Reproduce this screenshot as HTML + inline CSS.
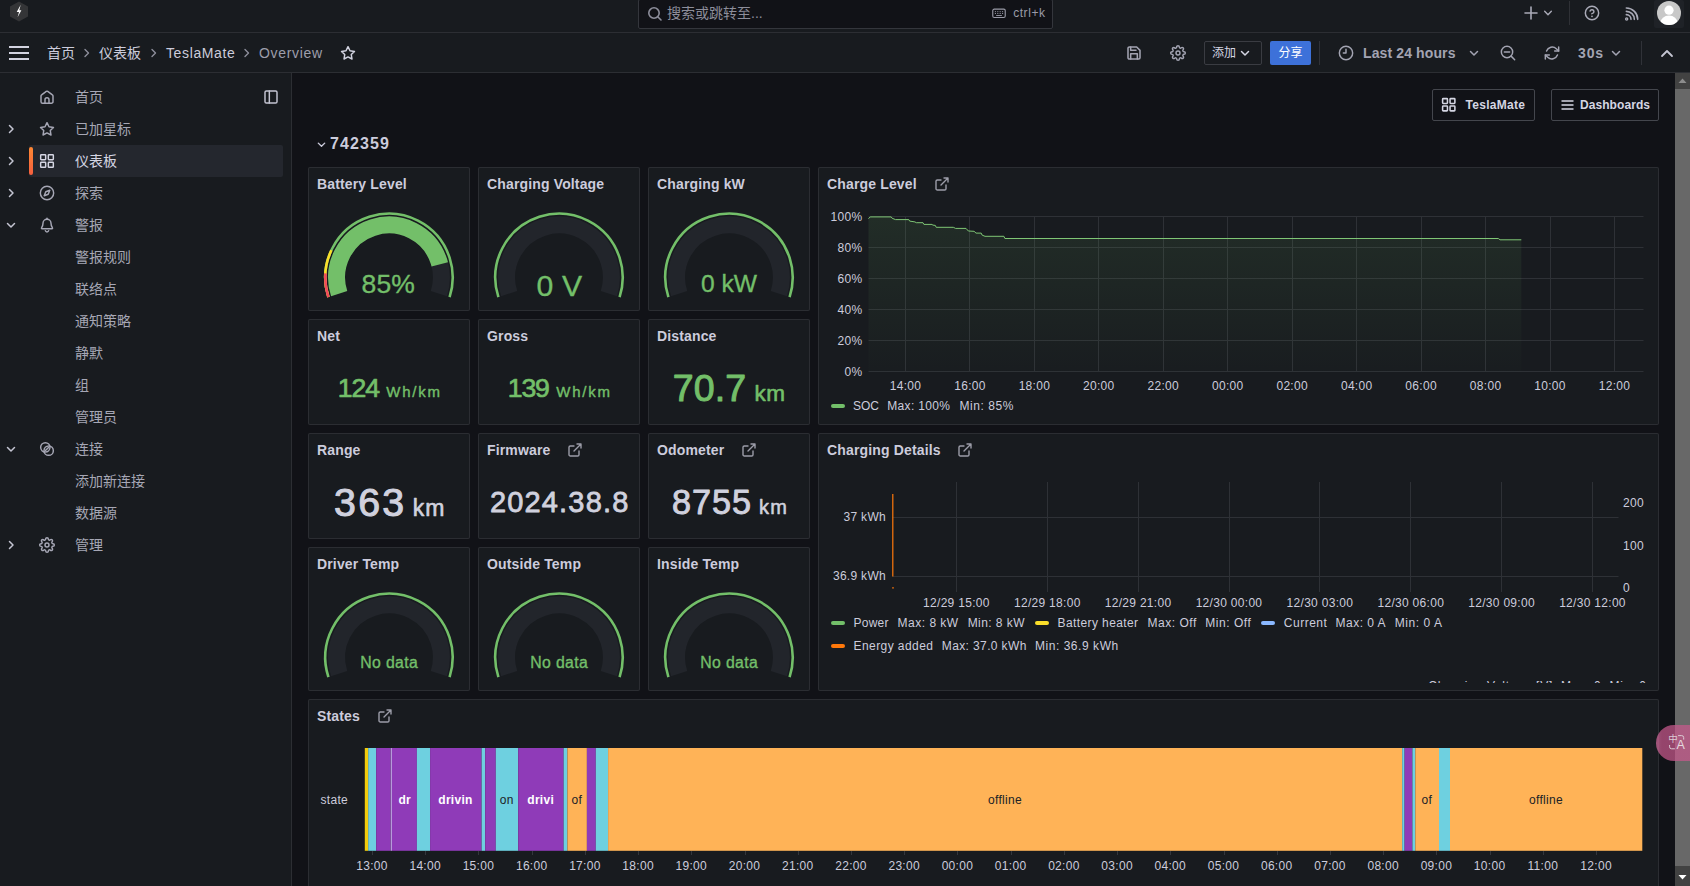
<!DOCTYPE html>
<html lang="zh-CN">
<head>
<meta charset="utf-8">
<title>Overview - TeslaMate - Grafana</title>
<style>
*{box-sizing:border-box;margin:0;padding:0}
html,body{width:1690px;height:886px;overflow:hidden;background:#111217;color:#ccccdc;
  font-family:"Liberation Sans","Noto Sans CJK SC",sans-serif;font-size:14px;}
body{position:relative}
.abs{position:absolute}
svg{display:block;overflow:visible}
.ic{fill:none;stroke:#c4c5d2;stroke-width:1.6;stroke-linecap:round;stroke-linejoin:round}

/* top bars */
#top1{position:absolute;left:0;top:0;width:1690px;height:33px;background:#181b1f;border-bottom:1px solid #2c2e33}
#top1 .ic{stroke:#a9aab7}
#top2{position:absolute;left:0;top:33px;width:1690px;height:40px;background:#181b1f;border-bottom:1px solid #2c2e33}
#search{position:absolute;left:638px;top:-1px;width:415px;height:30px;border:1px solid #34363c;border-radius:2px;background:#111217}
#search .ph{position:absolute;left:28px;top:3px;font-size:14px;color:#8d8e9b;line-height:20px}
#search .kb{position:absolute;right:6.5px;top:4px;font-size:12px;color:#9a9ba8;line-height:18px;letter-spacing:0.55px}
.crumb{position:absolute;top:0;height:40px;line-height:40px;font-size:14px;color:#ccccdc;white-space:nowrap}
.sep{color:#8d8e9b}

/* sidebar */
#side{position:absolute;left:0;top:73px;width:292px;height:813px;background:#181b1f;border-right:1px solid #2c2e33}
.nav{position:absolute;left:75px;height:32px;line-height:32px;font-size:14px;color:#a6a7b5;white-space:nowrap}
.nav.act{color:#d5d6e3}
.chev{position:absolute;left:5px;width:12px;height:12px}

/* panels */
.panel{position:absolute;background:#181b1f;box-shadow:inset 0 0 0 1px #2b2d32;border-radius:2px;overflow:hidden}
.ptitle{position:absolute;left:9px;top:7px;font-size:14px;font-weight:bold;color:#ccccdc;line-height:20px;white-space:nowrap;letter-spacing:0.15px}
.stat{position:absolute;left:0;width:100%;text-align:center;white-space:nowrap;font-weight:bold}
.val{font-family:"Liberation Sans",sans-serif}
.val.g text{fill:#73bf69}
.val.g:not(.m) text{stroke:#73bf69;stroke-width:0.35px;paint-order:stroke}
.val.w text{fill:#d0d1de}
.val.m text{stroke:currentColor;paint-order:stroke;stroke-linejoin:round}
.val.g.m{color:#73bf69}
.val.w.m{color:#d0d1de}
.axis{font-size:12px;fill:#ccccdc;font-family:"Liberation Sans",sans-serif;letter-spacing:0.3px}
.leg{position:absolute;font-size:12px;color:#ccccdc;white-space:nowrap;line-height:18px}

</style>
</head>
<body>

<!-- ===== TOP BAR 1 ===== -->
<div id="top1">
  <svg class="abs" style="left:9px;top:1px" width="20" height="21" viewBox="0 0 20 21">
    <polygon points="10,0.4 19,5.4 19,15.4 10,20.4 1,15.4 1,5.4" fill="#343537"/>
    <polygon points="11.7,3.8 7.7,10.9 10,10.9 8.6,16.2 12.4,9.2 10.3,9.2" fill="#ffffff"/>
  </svg>
  <div id="search">
    <svg class="abs" style="left:8px;top:6px" width="16" height="16" viewBox="0 0 16 16"><circle class="ic" cx="7" cy="7" r="5.2" style="stroke:#8d8e9b"/><path class="ic" d="M11 11l3 3" style="stroke:#8d8e9b"/></svg>
    <div class="ph">搜索或跳转至...</div>
    <svg class="abs" style="right:46.5px;top:7.5px" width="14" height="11" viewBox="0 0 15 12"><rect x="0.7" y="1.2" width="13.6" height="9.2" rx="1.6" fill="none" stroke="#9a9ba8" stroke-width="1.2"/><path d="M3 4h1.2M5.6 4h1.2M8.2 4h1.2M10.8 4h1.2M3 6h1.2M5.6 6h1.2M8.2 6h1.2M10.8 6h1.2M4.4 8.2h6.2" stroke="#9a9ba8" stroke-width="1" fill="none"/></svg>
    <div class="kb">ctrl+k</div>
  </div>
  <!-- right icons -->
  <svg class="abs" style="left:1523px;top:5px" width="16" height="16" viewBox="0 0 24 24"><path class="ic" style="stroke-width:2.4" d="M12 3v18M3 12h18"/></svg>
  <svg class="abs" style="left:1543px;top:8px" width="10" height="10" viewBox="0 0 24 24"><path class="ic" style="stroke-width:3.4" d="M4 8l8 8 8-8"/></svg>
  <div class="abs" style="left:1569px;top:1px;width:1px;height:24px;background:#2f3136"></div>
  <svg class="abs" style="left:1584px;top:5px" width="16" height="16" viewBox="0 0 24 24"><circle class="ic" style="stroke-width:2.2" cx="12" cy="12" r="10"/><path class="ic" style="stroke-width:2.2" d="M9.09 9a3 3 0 0 1 5.83 1c0 2-3 3-3 3"/><path class="ic" style="stroke-width:2.6" d="M12 17h.01"/></svg>
  <svg class="abs" style="left:1623px;top:6px" width="16" height="16" viewBox="0 0 24 24"><path class="ic" style="stroke-width:2.4" d="M5 13a7 7 0 0 1 7 7"/><path class="ic" style="stroke-width:2.4" d="M5 8a12 12 0 0 1 12 12"/><path class="ic" style="stroke-width:2.4" d="M5 3a17 17 0 0 1 17 17"/><circle class="ic" style="stroke-width:2" cx="5.5" cy="19.5" r="1.6"/></svg>
  <div class="abs" style="left:1654px;top:0;width:30px;height:28px;background:#1f2227;border-radius:2px"></div>
  <svg class="abs" style="left:1657px;top:1px" width="24" height="24" viewBox="0 0 24 24"><defs><clipPath id="av"><circle cx="12" cy="12" r="12"/></clipPath></defs><circle cx="12" cy="12" r="12" fill="#c8c8c8"/><g clip-path="url(#av)" fill="#fff"><circle cx="12" cy="9.2" r="4.6"/><ellipse cx="12" cy="22" rx="8.6" ry="7.4"/></g></svg>
</div>

<!-- ===== TOP BAR 2 ===== -->
<div id="top2">
  <svg class="abs" style="left:9px;top:11px" width="20" height="18" viewBox="0 0 20 18"><path d="M0 3h20M0 9h20M0 15h20" stroke="#d2d3e0" stroke-width="2" fill="none"/></svg>
  <div class="crumb" style="left:47px">首页</div>
  <svg class="abs" style="left:83px;top:15px" width="8" height="10" viewBox="0 0 8 10"><path class="ic" style="stroke:#8d8e9b;stroke-width:1.4" d="M2 1.5l3.5 3.5L2 8.5"/></svg>
  <div class="crumb" style="left:99px">仪表板</div>
  <svg class="abs" style="left:150px;top:15px" width="8" height="10" viewBox="0 0 8 10"><path class="ic" style="stroke:#8d8e9b;stroke-width:1.4" d="M2 1.5l3.5 3.5L2 8.5"/></svg>
  <div class="crumb" style="left:166px;letter-spacing:0.62px">TeslaMate</div>
  <svg class="abs" style="left:243px;top:15px" width="8" height="10" viewBox="0 0 8 10"><path class="ic" style="stroke:#8d8e9b;stroke-width:1.4" d="M2 1.5l3.5 3.5L2 8.5"/></svg>
  <div class="crumb" style="left:259px;color:#9d9eab;letter-spacing:0.68px">Overview</div>
  <svg class="abs" style="left:340px;top:12px" width="16" height="16" viewBox="0 0 24 24"><polygon class="ic" style="stroke-width:2.2;stroke:#d2d3e0" points="12 2.5 15 8.6 21.7 9.6 16.9 14.3 18 21 12 17.8 6 21 7.1 14.3 2.3 9.6 9 8.6"/></svg>

  <!-- save -->
  <svg class="abs" style="left:1126px;top:12px" width="16" height="16" viewBox="0 0 24 24"><path class="ic" style="stroke-width:2.3;stroke:#a3a4b2" d="M19 21H5a2 2 0 0 1-2-2V5a2 2 0 0 1 2-2h11l5 5v11a2 2 0 0 1-2 2z"/><path class="ic" style="stroke-width:2.3;stroke:#a3a4b2" d="M17 21v-8H7v8M7 3v5h8"/></svg>
  <!-- gear -->
  <svg class="abs" style="left:1170px;top:12px" width="16" height="16" viewBox="0 0 24 24"><circle class="ic" style="stroke-width:2.2;stroke:#a3a4b2" cx="12" cy="12" r="3"/><path class="ic" style="stroke-width:2.2;stroke:#a3a4b2" d="M19.4 15a1.65 1.65 0 0 0 .33 1.82l.06.06a2 2 0 0 1 0 2.83 2 2 0 0 1-2.83 0l-.06-.06a1.65 1.65 0 0 0-1.82-.33 1.65 1.65 0 0 0-1 1.51V21a2 2 0 0 1-2 2 2 2 0 0 1-2-2v-.09A1.65 1.65 0 0 0 9 19.4a1.65 1.65 0 0 0-1.82.33l-.06.06a2 2 0 0 1-2.83 0 2 2 0 0 1 0-2.83l.06-.06a1.65 1.65 0 0 0 .33-1.82 1.65 1.65 0 0 0-1.51-1H3a2 2 0 0 1-2-2 2 2 0 0 1 2-2h.09A1.65 1.65 0 0 0 4.6 9a1.65 1.65 0 0 0-.33-1.82l-.06-.06a2 2 0 0 1 0-2.83 2 2 0 0 1 2.83 0l.06.06a1.65 1.65 0 0 0 1.82.33H9a1.65 1.65 0 0 0 1-1.51V3a2 2 0 0 1 2-2 2 2 0 0 1 2 2v.09a1.65 1.65 0 0 0 1 1.51 1.65 1.65 0 0 0 1.82-.33l.06-.06a2 2 0 0 1 2.83 0 2 2 0 0 1 0 2.83l-.06.06a1.65 1.65 0 0 0-.33 1.82V9a1.65 1.65 0 0 0 1.51 1H21a2 2 0 0 1 2 2 2 2 0 0 1-2 2h-.09a1.65 1.65 0 0 0-1.51 1z"/></svg>
  <!-- add button -->
  <div class="abs" style="left:1204px;top:8px;width:58px;height:24px;border:1px solid #3a3c42;border-radius:2px"></div>
  <div class="abs" style="left:1212px;top:8px;height:24px;line-height:25px;font-size:12px;color:#d5d6e3">添加</div>
  <svg class="abs" style="left:1240px;top:16px" width="10" height="9" viewBox="0 0 10 9"><path class="ic" style="stroke:#d5d6e3;stroke-width:1.5" d="M1.5 2.5L5 6l3.5-3.5"/></svg>
  <!-- share -->
  <div class="abs" style="left:1270px;top:8px;width:41px;height:24px;background:#3d71d9;border-radius:2px;color:#fff;font-size:12px;line-height:25px;text-align:center">分享</div>
  <div class="abs" style="left:1319px;top:8px;width:1px;height:24px;background:#303238"></div>
  <!-- clock -->
  <svg class="abs" style="left:1338px;top:12px" width="16" height="16" viewBox="0 0 24 24"><circle class="ic" style="stroke-width:2.2;stroke:#a3a4b2" cx="12" cy="12" r="10"/><path class="ic" style="stroke-width:2.2;stroke:#a3a4b2" d="M12 6.5V12H8"/></svg>
  <div class="abs" id="l24" style="left:1363px;top:0;height:40px;line-height:41px;letter-spacing:0.12px;font-size:14px;font-weight:bold;color:#a3a4b2;white-space:nowrap">Last 24 hours</div>
  <svg class="abs" style="left:1469px;top:16px" width="10" height="9" viewBox="0 0 10 9"><path class="ic" style="stroke:#a3a4b2;stroke-width:1.5" d="M1.5 2.5L5 6l3.5-3.5"/></svg>
  <!-- zoom out -->
  <svg class="abs" style="left:1500px;top:12px" width="16" height="16" viewBox="0 0 24 24"><circle class="ic" style="stroke-width:2.2;stroke:#a3a4b2" cx="10.5" cy="10.5" r="8.5"/><path class="ic" style="stroke-width:2.2;stroke:#a3a4b2" d="M22 22l-5.3-5.3M6.5 10.5h8"/></svg>
  <!-- refresh -->
  <svg class="abs" style="left:1544px;top:12px" width="16" height="16" viewBox="0 0 24 24"><path class="ic" style="stroke-width:2.2;stroke:#a3a4b2" d="M22 3v6h-6M2 21v-6h6"/><path class="ic" style="stroke-width:2.2;stroke:#a3a4b2" d="M3.8 9a9 9 0 0 1 14.6-3.4L22 9M2 15l3.6 3.4A9 9 0 0 0 20.2 15"/></svg>
  <div class="abs" id="r30" style="left:1578px;top:0;height:40px;line-height:41px;letter-spacing:0.9px;font-size:14px;font-weight:bold;color:#a3a4b2;white-space:nowrap">30s</div>
  <svg class="abs" style="left:1611px;top:16px" width="10" height="9" viewBox="0 0 10 9"><path class="ic" style="stroke:#a3a4b2;stroke-width:1.5" d="M1.5 2.5L5 6l3.5-3.5"/></svg>
  <div class="abs" style="left:1641px;top:8px;width:1px;height:24px;background:#303238"></div>
  <svg class="abs" style="left:1660px;top:15px" width="14" height="11" viewBox="0 0 14 11"><path class="ic" style="stroke:#c4c5d2;stroke-width:1.8" d="M2 8l5-5 5 5"/></svg>
</div>

<!-- ===== SIDEBAR ===== -->
<div id="side">
  <div class="abs" style="left:29px;top:72px;width:254px;height:32px;background:#24272e;border-radius:2px"></div>
  <div class="abs" style="left:29px;top:74px;width:4px;height:28px;border-radius:2px;background:linear-gradient(0deg,#f55f3e,#ff8833)"></div>
  <svg class="abs" style="left:39px;top:16px;color:#a6a7b5" width="16" height="16" viewBox="0 0 24 24"><g class="ic" style="stroke:#a6a7b5;stroke-width:2.2"><path d="M3 10.5C3 9.8 3.3 9.2 3.9 8.8l7-5.2a1.9 1.9 0 0 1 2.2 0l7 5.2c.6.4.9 1 .9 1.7V19a2.5 2.5 0 0 1-2.5 2.5h-13A2.5 2.5 0 0 1 3 19z"/><path d="M9 21.5V16a3 3 0 0 1 6 0v5.5"/></g></svg>
  <div class="nav" style="top:8px">首页</div>
  <svg class="abs" style="left:263px;top:16px" width="16" height="16" viewBox="0 0 24 24"><g class="ic" style="stroke:#c4c5d2;stroke-width:2.2"><rect x="3" y="3" width="18" height="18" rx="2"/><path d="M9.5 3v18"/></g></svg>
  <svg class="abs" style="left:5px;top:50px" width="12" height="12" viewBox="0 0 12 12"><path class="ic" style="stroke:#c4c5d2;stroke-width:1.5" d="M4.5 2.5L8 6l-3.5 3.5"/></svg>
  <svg class="abs" style="left:39px;top:48px;color:#a6a7b5" width="16" height="16" viewBox="0 0 24 24"><g class="ic" style="stroke:#a6a7b5;stroke-width:2.2"><polygon points="12 2.5 15 8.6 21.7 9.6 16.9 14.3 18 21 12 17.8 6 21 7.1 14.3 2.3 9.6 9 8.6"/></g></svg>
  <div class="nav" style="top:40px">已加星标</div>
  <svg class="abs" style="left:5px;top:82px" width="12" height="12" viewBox="0 0 12 12"><path class="ic" style="stroke:#c4c5d2;stroke-width:1.5" d="M4.5 2.5L8 6l-3.5 3.5"/></svg>
  <svg class="abs" style="left:39px;top:80px;color:#d5d6e3" width="16" height="16" viewBox="0 0 24 24"><g class="ic" style="stroke:#d5d6e3;stroke-width:2.2"><rect x="2.5" y="2.5" width="7.5" height="7.5" rx="1"/><rect x="14" y="2.5" width="7.5" height="7.5" rx="1"/><rect x="14" y="14" width="7.5" height="7.5" rx="1"/><rect x="2.5" y="14" width="7.5" height="7.5" rx="1"/></g></svg>
  <div class="nav act" style="top:72px">仪表板</div>
  <svg class="abs" style="left:5px;top:114px" width="12" height="12" viewBox="0 0 12 12"><path class="ic" style="stroke:#c4c5d2;stroke-width:1.5" d="M4.5 2.5L8 6l-3.5 3.5"/></svg>
  <svg class="abs" style="left:39px;top:112px;color:#a6a7b5" width="16" height="16" viewBox="0 0 24 24"><g class="ic" style="stroke:#a6a7b5;stroke-width:2.2"><circle cx="12" cy="12" r="10"/><polygon points="16.2 7.8 13.8 13.8 7.8 16.2 10.2 10.2"/></g></svg>
  <div class="nav" style="top:104px">探索</div>
  <svg class="abs" style="left:5px;top:146px" width="12" height="12" viewBox="0 0 12 12"><path class="ic" style="stroke:#c4c5d2;stroke-width:1.5" d="M2.5 4.5L6 8l3.5-3.5"/></svg>
  <svg class="abs" style="left:39px;top:144px;color:#a6a7b5" width="16" height="16" viewBox="0 0 24 24"><g class="ic" style="stroke:#a6a7b5;stroke-width:2.2"><path d="M18 9.5a6 6 0 0 0-12 0c0 3.5-1 5.3-2.2 6.8-.4.5 0 1.2.6 1.2h15.2c.6 0 1-.7.6-1.2C19 14.8 18 13 18 9.5z"/><path d="M9.5 20.5a2.6 2.6 0 0 0 5 0"/><path d="M12 3.5V2"/></g></svg>
  <div class="nav" style="top:136px">警报</div>
  <div class="nav" style="top:168px">警报规则</div>
  <div class="nav" style="top:200px">联络点</div>
  <div class="nav" style="top:232px">通知策略</div>
  <div class="nav" style="top:264px">静默</div>
  <div class="nav" style="top:296px">组</div>
  <div class="nav" style="top:328px">管理员</div>
  <svg class="abs" style="left:5px;top:370px" width="12" height="12" viewBox="0 0 12 12"><path class="ic" style="stroke:#c4c5d2;stroke-width:1.5" d="M2.5 4.5L6 8l3.5-3.5"/></svg>
  <svg class="abs" style="left:39px;top:368px;color:#a6a7b5" width="16" height="16" viewBox="0 0 24 24"><g class="ic" style="stroke:#a6a7b5;stroke-width:2.2"><circle cx="9.5" cy="9.5" r="7"/><circle cx="14.5" cy="14.5" r="7"/><path d="M9.7 14.300l4.6-4.6"/></g></svg>
  <div class="nav" style="top:360px">连接</div>
  <div class="nav" style="top:392px">添加新连接</div>
  <div class="nav" style="top:424px">数据源</div>
  <svg class="abs" style="left:5px;top:466px" width="12" height="12" viewBox="0 0 12 12"><path class="ic" style="stroke:#c4c5d2;stroke-width:1.5" d="M4.5 2.5L8 6l-3.5 3.5"/></svg>
  <svg class="abs" style="left:39px;top:464px;color:#a6a7b5" width="16" height="16" viewBox="0 0 24 24"><g class="ic" style="stroke:#a6a7b5;stroke-width:2.2"><circle cx="12" cy="12" r="3"/><path d="M19.4 15a1.65 1.65 0 0 0 .33 1.82l.06.06a2 2 0 0 1 0 2.83 2 2 0 0 1-2.83 0l-.06-.06a1.65 1.65 0 0 0-1.82-.33 1.65 1.65 0 0 0-1 1.51V21a2 2 0 0 1-2 2 2 2 0 0 1-2-2v-.09A1.65 1.65 0 0 0 9 19.4a1.65 1.65 0 0 0-1.82.33l-.06.06a2 2 0 0 1-2.83 0 2 2 0 0 1 0-2.83l.06-.06a1.65 1.65 0 0 0 .33-1.82 1.65 1.65 0 0 0-1.51-1H3a2 2 0 0 1-2-2 2 2 0 0 1 2-2h.09A1.65 1.65 0 0 0 4.6 9a1.65 1.65 0 0 0-.33-1.82l-.06-.06a2 2 0 0 1 0-2.83 2 2 0 0 1 2.83 0l.06.06a1.65 1.65 0 0 0 1.82.33H9a1.65 1.65 0 0 0 1-1.51V3a2 2 0 0 1 2-2 2 2 0 0 1 2 2v.09a1.65 1.65 0 0 0 1 1.51 1.65 1.65 0 0 0 1.82-.33l.06-.06a2 2 0 0 1 2.83 0 2 2 0 0 1 0 2.83l-.06.06a1.65 1.65 0 0 0-.33 1.82V9a1.65 1.65 0 0 0 1.51 1H21a2 2 0 0 1 2 2 2 2 0 0 1-2 2h-.09a1.65 1.65 0 0 0-1.51 1z"/></g></svg>
  <div class="nav" style="top:456px">管理</div>
</div>

<!-- ===== MAIN ===== -->
<div id="main">
<svg class="abs" style="left:316px;top:139px" width="11" height="11" viewBox="0 0 12 12"><path class="ic" style="stroke:#ccccdc;stroke-width:1.5" d="M2.5 4.5L6 8l3.5-3.5"/></svg>
<div class="abs" id="rowt" style="left:330px;top:131px;height:24px;line-height:25px;font-size:16px;font-weight:bold;letter-spacing:1.1px;color:#ccccdc">742359</div>
<div class="abs" style="left:1432px;top:89px;width:103px;height:32px;border:1px solid #44464d;border-radius:2px"></div>
<svg class="abs" style="left:1441.3px;top:97.3px" width="15.5" height="15.5" viewBox="0 0 24 24"><g class="ic" style="stroke:#d5d6e3;stroke-width:2.4"><rect x="2.5" y="2.5" width="7.5" height="7.5" rx="1"/><rect x="14" y="2.5" width="7.5" height="7.5" rx="1"/><rect x="14" y="14" width="7.5" height="7.5" rx="1"/><rect x="2.5" y="14" width="7.5" height="7.5" rx="1"/></g></svg>
<div class="abs" id="btm" style="left:1465.5px;top:89px;height:32px;line-height:33px;letter-spacing:0.3px;font-size:12px;font-weight:bold;color:#d5d6e3">TeslaMate</div>
<div class="abs" style="left:1551px;top:89px;width:108px;height:32px;border:1px solid #44464d;border-radius:2px"></div>
<svg class="abs" style="left:1561px;top:99px" width="13" height="12" viewBox="0 0 13 12"><path d="M0.5 2h12M0.5 6h12M0.5 10h12" stroke="#d5d6e3" stroke-width="1.5" fill="none"/></svg>
<div class="abs" id="bdb" style="left:1580px;top:89px;height:32px;line-height:33px;letter-spacing:0.07px;font-size:12px;font-weight:bold;color:#d5d6e3">Dashboards</div>
<div class="panel" style="left:308px;top:167px;width:162px;height:144px"><div class="ptitle">Battery Level</div><svg class="abs" style="left:0;top:0" width="162" height="144"><g transform="rotate(162 81 110.4)" fill="none"><circle cx="81" cy="110.4" r="52.4" stroke="#22252b" stroke-width="17" pathLength="360" stroke-dasharray="216 360"/><circle cx="81" cy="110.4" r="52.4" stroke="#73bf69" stroke-width="17" pathLength="360" stroke-dasharray="183.6 360"/><circle cx="81" cy="110.4" r="63.7" stroke="#73bf69" stroke-width="2.6" pathLength="360" stroke-dasharray="216 360"/><circle cx="81" cy="110.4" r="63.7" stroke="#fade2a" stroke-width="2.6" pathLength="360" stroke-dasharray="43.2 360"/><circle cx="81" cy="110.4" r="63.7" stroke="#f2495c" stroke-width="2.6" pathLength="360" stroke-dasharray="21.6 360"/></g></svg><svg class="abs val g" style="left:0;top:0" width="162" height="144"><text x="53.6" y="126.1" font-size="26.5" textLength="53.3" lengthAdjust="spacing">85%</text></svg></div>
<div class="panel" style="left:478px;top:167px;width:162px;height:144px"><div class="ptitle">Charging Voltage</div><svg class="abs" style="left:0;top:0" width="162" height="144"><g transform="rotate(162 81 110.4)" fill="none"><circle cx="81" cy="110.4" r="52.4" stroke="#22252b" stroke-width="17" pathLength="360" stroke-dasharray="216 360"/><circle cx="81" cy="110.4" r="63.7" stroke="#73bf69" stroke-width="2.6" pathLength="360" stroke-dasharray="216 360"/></g></svg><svg class="abs val g" style="left:0;top:0" width="162" height="144"><text x="58.4" y="129.0" font-size="30.2" textLength="45.8" lengthAdjust="spacing">0 V</text></svg></div>
<div class="panel" style="left:648px;top:167px;width:162px;height:144px"><div class="ptitle">Charging kW</div><svg class="abs" style="left:0;top:0" width="162" height="144"><g transform="rotate(162 81 110.4)" fill="none"><circle cx="81" cy="110.4" r="52.4" stroke="#22252b" stroke-width="17" pathLength="360" stroke-dasharray="216 360"/><circle cx="81" cy="110.4" r="63.7" stroke="#73bf69" stroke-width="2.6" pathLength="360" stroke-dasharray="216 360"/></g></svg><svg class="abs val g" style="left:0;top:0" width="162" height="144"><text x="53.1" y="125.1" font-size="24.6" textLength="55.8" lengthAdjust="spacing">0 kW</text></svg></div>
<div class="panel" style="left:308px;top:319px;width:162px;height:106px"><div class="ptitle">Net</div><svg class="abs val g m" style="left:0;top:0" width="162" height="106"><text x="29.8" y="77.9" font-size="26.6" stroke-width="0.72" textLength="42.3" lengthAdjust="spacing">124</text><text x="78.3" y="77.9" font-size="15" stroke-width="0.40" textLength="53.8" lengthAdjust="spacing">Wh/km</text></svg></div>
<div class="panel" style="left:478px;top:319px;width:162px;height:106px"><div class="ptitle">Gross</div><svg class="abs val g m" style="left:0;top:0" width="162" height="106"><text x="29.8" y="77.9" font-size="26.6" stroke-width="0.72" textLength="42.0" lengthAdjust="spacing">139</text><text x="78.3" y="77.9" font-size="15" stroke-width="0.40" textLength="53.8" lengthAdjust="spacing">Wh/km</text></svg></div>
<div class="panel" style="left:648px;top:319px;width:162px;height:106px"><div class="ptitle">Distance</div><svg class="abs val g m" style="left:0;top:0" width="162" height="106"><text x="24.8" y="82.0" font-size="37.5" stroke-width="1.01" textLength="73.4" lengthAdjust="spacing">70.7</text><text x="106.4" y="82.0" font-size="22.5" stroke-width="0.61" textLength="30.7" lengthAdjust="spacing">km</text></svg></div>
<div class="panel" style="left:308px;top:433px;width:162px;height:106px"><div class="ptitle">Range</div><svg class="abs val w m" style="left:0;top:0" width="162" height="106"><text x="26.1" y="83.0" font-size="39.3" stroke-width="1.06" textLength="70.0" lengthAdjust="spacing">363</text><text x="104.8" y="83.0" font-size="23" stroke-width="0.62" textLength="31.5" lengthAdjust="spacing">km</text></svg></div>
<div class="panel" style="left:478px;top:433px;width:162px;height:106px"><div class="ptitle">Firmware</div><svg class="abs" style="left:88.8px;top:8.6px" width="16" height="16" viewBox="0 0 24 24"><g class="ic" style="stroke:#9c9da9;stroke-width:2.1"><path d="M18 13.5V19a2 2 0 0 1-2 2H5a2 2 0 0 1-2-2V8a2 2 0 0 1 2-2h5.5"/><path d="M15 3h6v6M10.5 13.5L21 3"/></g></svg><svg class="abs val w m" style="left:0;top:0" width="162" height="106"><text x="11.9" y="78.8" font-size="29" stroke-width="0.78" textLength="138.4" lengthAdjust="spacing">2024.38.8</text></svg></div>
<div class="panel" style="left:648px;top:433px;width:162px;height:106px"><div class="ptitle">Odometer</div><svg class="abs" style="left:92.8px;top:8.6px" width="16" height="16" viewBox="0 0 24 24"><g class="ic" style="stroke:#9c9da9;stroke-width:2.1"><path d="M18 13.5V19a2 2 0 0 1-2 2H5a2 2 0 0 1-2-2V8a2 2 0 0 1 2-2h5.5"/><path d="M15 3h6v6M10.5 13.5L21 3"/></g></svg><svg class="abs val w m" style="left:0;top:0" width="162" height="106"><text x="24.0" y="80.9" font-size="34.2" stroke-width="0.92" textLength="79.1" lengthAdjust="spacing">8755</text><text x="111.0" y="80.9" font-size="20" stroke-width="0.54" textLength="27.8" lengthAdjust="spacing">km</text></svg></div>
<div class="panel" style="left:308px;top:547px;width:162px;height:144px"><div class="ptitle">Driver Temp</div><svg class="abs" style="left:0;top:0" width="162" height="144"><g transform="rotate(162 81 110.4)" fill="none"><circle cx="81" cy="110.4" r="52.4" stroke="#22252b" stroke-width="17" pathLength="360" stroke-dasharray="216 360"/><circle cx="81" cy="110.4" r="63.7" stroke="#73bf69" stroke-width="2.6" pathLength="360" stroke-dasharray="216 360"/></g></svg><svg class="abs val g" style="left:0;top:0" width="162" height="144"><text x="52.3" y="120.5" font-size="15.8" textLength="57.5" lengthAdjust="spacing">No data</text></svg></div>
<div class="panel" style="left:478px;top:547px;width:162px;height:144px"><div class="ptitle">Outside Temp</div><svg class="abs" style="left:0;top:0" width="162" height="144"><g transform="rotate(162 81 110.4)" fill="none"><circle cx="81" cy="110.4" r="52.4" stroke="#22252b" stroke-width="17" pathLength="360" stroke-dasharray="216 360"/><circle cx="81" cy="110.4" r="63.7" stroke="#73bf69" stroke-width="2.6" pathLength="360" stroke-dasharray="216 360"/></g></svg><svg class="abs val g" style="left:0;top:0" width="162" height="144"><text x="52.3" y="120.5" font-size="15.8" textLength="57.5" lengthAdjust="spacing">No data</text></svg></div>
<div class="panel" style="left:648px;top:547px;width:162px;height:144px"><div class="ptitle">Inside Temp</div><svg class="abs" style="left:0;top:0" width="162" height="144"><g transform="rotate(162 81 110.4)" fill="none"><circle cx="81" cy="110.4" r="52.4" stroke="#22252b" stroke-width="17" pathLength="360" stroke-dasharray="216 360"/><circle cx="81" cy="110.4" r="63.7" stroke="#73bf69" stroke-width="2.6" pathLength="360" stroke-dasharray="216 360"/></g></svg><svg class="abs val g" style="left:0;top:0" width="162" height="144"><text x="52.3" y="120.5" font-size="15.8" textLength="57.5" lengthAdjust="spacing">No data</text></svg></div>
<div class="panel" style="left:818px;top:167px;width:841px;height:258px"><div class="ptitle">Charge Level</div><svg class="abs" style="left:115.8px;top:8.6px" width="16" height="16" viewBox="0 0 24 24"><g class="ic" style="stroke:#9c9da9;stroke-width:2.1"><path d="M18 13.5V19a2 2 0 0 1-2 2H5a2 2 0 0 1-2-2V8a2 2 0 0 1 2-2h5.5"/><path d="M15 3h6v6M10.5 13.5L21 3"/></g></svg><svg class="abs" style="left:0;top:0" width="842" height="258"><g transform="translate(-818 -167)"><defs><linearGradient id="gf" x1="0" y1="0" x2="0" y2="1"><stop offset="0" stop-color="#73bf69" stop-opacity="0.11"/><stop offset="1" stop-color="#73bf69" stop-opacity="0.01"/></linearGradient></defs><path d="M868.5 216.5H1643.5M868.5 247.5H1643.5M868.5 278.5H1643.5M868.5 309.5H1643.5M868.5 340.5H1643.5M868.5 371.5H1643.5M905.5 216V372M969.5 216V372M1034.5 216V372M1098.5 216V372M1163.5 216V372M1227.5 216V372M1292.5 216V372M1356.5 216V372M1421.5 216V372M1485.5 216V372M1550.5 216V372M1614.5 216V372" stroke="#2e3136" stroke-width="1" fill="none"/><path d="M868.5 218.7 L870.2 216.9 L891.2 216.9 L892.2 218.3 L895.5 219.6 L908.8 219.6 L909.7 221.1 L914.9 221.9 L916.3 222.7 L923 222.7 L923.9 224.4 L932 224.4 L932.9 225.1 L935.3 225.4 L936.2 227.3 L953.3 227.3 L955.6 228.4 L966 228.4 L968.4 231 L974.1 231.3 L976 233.1 L981.2 233.1 L982.1 235.1 L985 236.3 L1003.9 236.3 L1004.9 238.5 L1498.4 238.5 L1500 239.8 L1521.3 239.8 L1521.3 371.5 L868.5 371.5 Z" fill="url(#gf)"/><path d="M868.5 218.7 L870.2 216.9 L891.2 216.9 L892.2 218.3 L895.5 219.6 L908.8 219.6 L909.7 221.1 L914.9 221.9 L916.3 222.7 L923 222.7 L923.9 224.4 L932 224.4 L932.9 225.1 L935.3 225.4 L936.2 227.3 L953.3 227.3 L955.6 228.4 L966 228.4 L968.4 231 L974.1 231.3 L976 233.1 L981.2 233.1 L982.1 235.1 L985 236.3 L1003.9 236.3 L1004.9 238.5 L1498.4 238.5 L1500 239.8 L1521.3 239.8" stroke="#7fc675" stroke-width="1" fill="none" stroke-linejoin="round"/><text class="axis" x="862.5" y="375.7" text-anchor="end">0%</text><text class="axis" x="862.5" y="344.7" text-anchor="end">20%</text><text class="axis" x="862.5" y="313.7" text-anchor="end">40%</text><text class="axis" x="862.5" y="282.7" text-anchor="end">60%</text><text class="axis" x="862.5" y="251.7" text-anchor="end">80%</text><text class="axis" x="862.5" y="220.7" text-anchor="end">100%</text><text class="axis" x="905.5" y="390" text-anchor="middle">14:00</text><text class="axis" x="970.0" y="390" text-anchor="middle">16:00</text><text class="axis" x="1034.4" y="390" text-anchor="middle">18:00</text><text class="axis" x="1098.8" y="390" text-anchor="middle">20:00</text><text class="axis" x="1163.3" y="390" text-anchor="middle">22:00</text><text class="axis" x="1227.8" y="390" text-anchor="middle">00:00</text><text class="axis" x="1292.2" y="390" text-anchor="middle">02:00</text><text class="axis" x="1356.7" y="390" text-anchor="middle">04:00</text><text class="axis" x="1421.1" y="390" text-anchor="middle">06:00</text><text class="axis" x="1485.6" y="390" text-anchor="middle">08:00</text><text class="axis" x="1550.0" y="390" text-anchor="middle">10:00</text><text class="axis" x="1614.5" y="390" text-anchor="middle">12:00</text></g></svg><div class="abs" style="left:13.0px;top:237.0px;width:14px;height:4px;border-radius:2px;background:#73bf69"></div><div class="leg" style="left:35.0px;top:229.6px;letter-spacing:-0.01px">SOC</div><div class="leg" style="left:69.2px;top:229.6px;letter-spacing:0.35px">Max: 100%</div><div class="leg" style="left:141.4px;top:229.6px;letter-spacing:0.57px">Min: 85%</div></div>
<div class="panel" style="left:818px;top:433px;width:841px;height:258px"><div class="ptitle">Charging Details</div><svg class="abs" style="left:138.8px;top:8.6px" width="16" height="16" viewBox="0 0 24 24"><g class="ic" style="stroke:#9c9da9;stroke-width:2.1"><path d="M18 13.5V19a2 2 0 0 1-2 2H5a2 2 0 0 1-2-2V8a2 2 0 0 1 2-2h5.5"/><path d="M15 3h6v6M10.5 13.5L21 3"/></g></svg><svg class="abs" style="left:0;top:0" width="842" height="258"><g transform="translate(-818 -433)"><path d="M892.5 517.5H1618.5M892.5 576.5H1618.5M956.5 482V592M1047.5 482V592M1138.5 482V592M1229.5 482V592M1319.5 482V592M1410.5 482V592M1501.5 482V592M1592.5 482V592" stroke="#2e3136" stroke-width="1" fill="none"/><path d="M892.8 494V576.5" stroke="#ff780a" stroke-width="1.2" fill="none"/><path d="M892.2 587.8h1.6" stroke="#ff780a" stroke-width="1.2"/><text class="axis" x="886" y="521" text-anchor="end">37 kWh</text><text class="axis" x="886" y="580" text-anchor="end">36.9 kWh</text><text class="axis" x="1623" y="507">200</text><text class="axis" x="1623" y="550">100</text><text class="axis" x="1623" y="592">0</text><text class="axis" x="956.4" y="607" text-anchor="middle">12/29 15:00</text><text class="axis" x="1047.3" y="607" text-anchor="middle">12/29 18:00</text><text class="axis" x="1138.1" y="607" text-anchor="middle">12/29 21:00</text><text class="axis" x="1229.0" y="607" text-anchor="middle">12/30 00:00</text><text class="axis" x="1319.9" y="607" text-anchor="middle">12/30 03:00</text><text class="axis" x="1410.8" y="607" text-anchor="middle">12/30 06:00</text><text class="axis" x="1501.6" y="607" text-anchor="middle">12/30 09:00</text><text class="axis" x="1592.5" y="607" text-anchor="middle">12/30 12:00</text></g></svg><div class="abs" style="left:13.0px;top:188.0px;width:14px;height:4px;border-radius:2px;background:#73bf69"></div><div class="abs" style="left:217.0px;top:188.0px;width:14px;height:4px;border-radius:2px;background:#fade2a"></div><div class="abs" style="left:443.0px;top:188.0px;width:14px;height:4px;border-radius:2px;background:#8ab8ff"></div><div class="abs" style="left:13.0px;top:211.3px;width:14px;height:4px;border-radius:2px;background:#ff780a"></div><div class="leg" style="left:35.5px;top:180.9px;letter-spacing:0.25px">Power</div><div class="leg" style="left:79.6px;top:180.9px;letter-spacing:0.49px">Max: 8 kW</div><div class="leg" style="left:149.7px;top:180.9px;letter-spacing:0.43px">Min: 8 kW</div><div class="leg" style="left:239.6px;top:180.9px;letter-spacing:0.39px">Battery heater</div><div class="leg" style="left:329.4px;top:180.9px;letter-spacing:0.54px">Max: Off</div><div class="leg" style="left:387.2px;top:180.9px;letter-spacing:0.54px">Min: Off</div><div class="leg" style="left:465.8px;top:180.9px;letter-spacing:0.51px">Current</div><div class="leg" style="left:517.5px;top:180.9px;letter-spacing:0.49px">Max: 0 A</div><div class="leg" style="left:576.7px;top:180.9px;letter-spacing:0.58px">Min: 0 A</div><div class="leg" style="left:35.5px;top:203.7px;letter-spacing:0.43px">Energy added</div><div class="leg" style="left:123.8px;top:203.7px;letter-spacing:0.38px">Max: 37.0 kWh</div><div class="leg" style="left:216.9px;top:203.7px;letter-spacing:0.55px">Min: 36.9 kWh</div><div class="abs" style="left:602px;top:243px;width:236px;height:6.8px;overflow:hidden"><div class="leg" style="left:8.3px;top:1.2px;letter-spacing:0.73px;white-space:pre">Charging Voltage [V]  Max: 0  Min: 0</div></div></div>
<div class="panel" style="left:308px;top:699px;width:1351px;height:220px"><div class="ptitle">States</div><svg class="abs" style="left:68.8px;top:8.6px" width="16" height="16" viewBox="0 0 24 24"><g class="ic" style="stroke:#9c9da9;stroke-width:2.1"><path d="M18 13.5V19a2 2 0 0 1-2 2H5a2 2 0 0 1-2-2V8a2 2 0 0 1 2-2h5.5"/><path d="M15 3h6v6M10.5 13.5L21 3"/></g></svg><svg class="abs" style="left:0;top:0" width="1352" height="187"><g transform="translate(-308 -699)"><rect x="364.8" y="748" width="3.4" height="102.8" fill="#f2cc0c"/><rect x="368.2" y="748" width="8.0" height="102.8" fill="#6ed0e0"/><rect x="376.2" y="748" width="14.5" height="102.8" fill="#8f3bb8"/><rect x="390.7" y="748" width="1.3" height="102.8" fill="#b79adb"/><rect x="392.0" y="748" width="24.9" height="102.8" fill="#8f3bb8"/><rect x="416.9" y="748" width="13.2" height="102.8" fill="#6ed0e0"/><rect x="430.1" y="748" width="51.5" height="102.8" fill="#8f3bb8"/><rect x="481.6" y="748" width="3.6" height="102.8" fill="#6ed0e0"/><rect x="485.2" y="748" width="10.6" height="102.8" fill="#8f3bb8"/><rect x="495.8" y="748" width="22.4" height="102.8" fill="#6ed0e0"/><rect x="518.2" y="748" width="45.4" height="102.8" fill="#8f3bb8"/><rect x="563.6" y="748" width="3.8" height="102.8" fill="#6ed0e0"/><rect x="567.4" y="748" width="19.5" height="102.8" fill="#ffb357"/><rect x="586.9" y="748" width="8.9" height="102.8" fill="#8f3bb8"/><rect x="595.8" y="748" width="12.3" height="102.8" fill="#6ed0e0"/><rect x="608.1" y="748" width="794.1" height="102.8" fill="#ffb357"/><rect x="1402.2" y="748" width="2.4" height="102.8" fill="#6ed0e0"/><rect x="1404.6" y="748" width="7.8" height="102.8" fill="#8f3bb8"/><rect x="1412.4" y="748" width="2.9" height="102.8" fill="#6ed0e0"/><rect x="1415.3" y="748" width="23.7" height="102.8" fill="#ffb357"/><rect x="1439.0" y="748" width="11.0" height="102.8" fill="#6ed0e0"/><rect x="1450.0" y="748" width="192.3" height="102.8" fill="#ffb357"/><text class="axis" x="372.0" y="870" text-anchor="middle">13:00</text><text class="axis" x="425.2" y="870" text-anchor="middle">14:00</text><text class="axis" x="478.4" y="870" text-anchor="middle">15:00</text><text class="axis" x="531.7" y="870" text-anchor="middle">16:00</text><text class="axis" x="584.9" y="870" text-anchor="middle">17:00</text><text class="axis" x="638.1" y="870" text-anchor="middle">18:00</text><text class="axis" x="691.3" y="870" text-anchor="middle">19:00</text><text class="axis" x="744.5" y="870" text-anchor="middle">20:00</text><text class="axis" x="797.8" y="870" text-anchor="middle">21:00</text><text class="axis" x="851.0" y="870" text-anchor="middle">22:00</text><text class="axis" x="904.2" y="870" text-anchor="middle">23:00</text><text class="axis" x="957.4" y="870" text-anchor="middle">00:00</text><text class="axis" x="1010.6" y="870" text-anchor="middle">01:00</text><text class="axis" x="1063.9" y="870" text-anchor="middle">02:00</text><text class="axis" x="1117.1" y="870" text-anchor="middle">03:00</text><text class="axis" x="1170.3" y="870" text-anchor="middle">04:00</text><text class="axis" x="1223.5" y="870" text-anchor="middle">05:00</text><text class="axis" x="1276.7" y="870" text-anchor="middle">06:00</text><text class="axis" x="1330.0" y="870" text-anchor="middle">07:00</text><text class="axis" x="1383.2" y="870" text-anchor="middle">08:00</text><text class="axis" x="1436.4" y="870" text-anchor="middle">09:00</text><text class="axis" x="1489.6" y="870" text-anchor="middle">10:00</text><text class="axis" x="1542.8" y="870" text-anchor="middle">11:00</text><text class="axis" x="1596.1" y="870" text-anchor="middle">12:00</text><path d="M372.5 851V855M425.5 851V855M478.5 851V855M532.5 851V855M585.5 851V855M638.5 851V855M691.5 851V855M745.5 851V855M798.5 851V855M851.5 851V855M904.5 851V855M957.5 851V855M1011.5 851V855M1064.5 851V855M1117.5 851V855M1170.5 851V855M1224.5 851V855M1277.5 851V855M1330.5 851V855M1383.5 851V855M1436.5 851V855M1490.5 851V855M1543.5 851V855M1596.5 851V855" stroke="#34373d" stroke-width="1"/><text class="axis" x="320.5" y="804">state</text><text class="axis" x="404.8" y="804" text-anchor="middle" style="fill:#fff;font-weight:bold">dr</text><text class="axis" x="455.5" y="804" text-anchor="middle" style="fill:#fff;font-weight:bold">drivin</text><text class="axis" x="540.7" y="804" text-anchor="middle" style="fill:#fff;font-weight:bold">drivi</text><text class="axis" x="506.8" y="804" text-anchor="middle" style="fill:#202226">on</text><text class="axis" x="576.8" y="804" text-anchor="middle" style="fill:#202226">of</text><text class="axis" x="1005" y="804" text-anchor="middle" style="fill:#202226">offline</text><text class="axis" x="1426.8" y="804" text-anchor="middle" style="fill:#202226">of</text><text class="axis" x="1546" y="804" text-anchor="middle" style="fill:#202226">offline</text></g></svg></div>
<div class="abs" style="left:1675px;top:73px;width:15px;height:813px;background:#424242"></div>
<div class="abs" style="left:1675px;top:89px;width:15px;height:777px;background:#686868"></div>
<svg class="abs" style="left:1675px;top:73px" width="15" height="16"><polygon points="7.5,5.5 11.5,10 3.5,10" fill="#8c8c8c"/></svg>
<svg class="abs" style="left:1675px;top:866px" width="15" height="20"><polygon points="3.5,9 11.5,9 7.5,13.5" fill="#ffffff"/></svg>
<div class="abs" style="left:1656px;top:724.6px;width:70px;height:36.4px;border-radius:18.2px;background:linear-gradient(90deg,rgba(215,110,160,0.72),rgba(200,88,140,0.72) 6px)"></div>
<div class="abs" style="left:1668.3px;top:733.6px;font-size:9.5px;line-height:10px;color:#dccbd4">中</div>
<div class="abs" style="left:1676.6px;top:739.3px;font-size:12.5px;line-height:13px;color:#e4d8de">A</div>
<svg class="abs" style="left:1666px;top:732px" width="22" height="20" viewBox="0 0 22 20"><path d="M12.5 3.6h3.200a2 2 0 0 1 2 2v1.6M8.5 16.8H5.6a2 2 0 0 1-2-2v-1.400" fill="none" stroke="#dccbd4" stroke-width="1" stroke-linecap="round"/></svg>

</div>

</body>
</html>
